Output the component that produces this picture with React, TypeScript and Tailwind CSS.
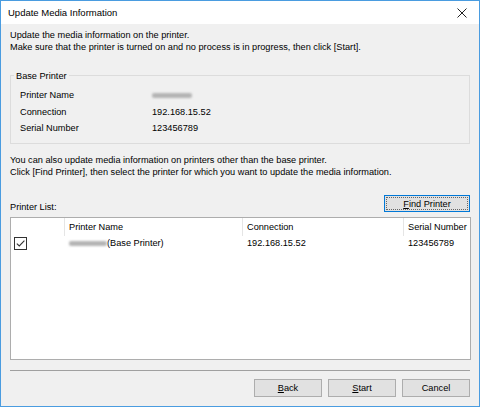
import React from "react";

const font = { fontFamily: '"Liberation Sans", Arial, sans-serif' };

function Blur({ w }: { w: number }) {
  return (
    <span className="inline-flex items-center h-[12px]" style={{ width: w }}>
      <span className="block h-[5px] w-full bg-[#b4b4b4] rounded-[2px] blur-[1.2px]" />
    </span>
  );
}

function Btn({ children }: { children: React.ReactNode }) {
  return (
    <div className="h-[18px] w-[68px] flex items-center justify-center bg-[#e1e1e1] border border-[#adadad] text-black">
      {children}
    </div>
  );
}

export default function App() {
  return (
    <div
      className="w-[480px] h-[407px] border border-[#4a9ce0] bg-[#f0f0f0] flex flex-col text-[9.2px] leading-[12px] text-black overflow-hidden"
      style={font}
    >
      <div className="h-[23px] bg-white flex items-center justify-between pl-[7px] pr-[12px] shrink-0">
        <span className="text-[9.5px]">Update Media Information</span>
        <svg width="10" height="10" viewBox="0 0 10 10">
          <path d="M0.5 0.5 L9.5 9.5 M9.5 0.5 L0.5 9.5" stroke="#222" strokeWidth="1" />
        </svg>
      </div>
      <div className="flex flex-col px-[9px] pt-[5px]">
        <div>
          <div>Update the media information on the printer.</div>
          <div>Make sure that the printer is turned on and no process is in progress, then click [Start].</div>
        </div>
        <div className="mt-[22px] border border-[#dcdcdc] h-[69px] relative pl-[9px] pt-[11px]">
          <span className="absolute -top-[6px] left-[3px] bg-[#f0f0f0] px-[2px]">Base Printer</span>
          <div className="grid grid-cols-[132px_1fr] auto-rows-[16.5px] items-center">
            <div>Printer Name</div>
            <div className="flex items-center"><Blur w={40} /></div>
            <div>Connection</div>
            <div>192.168.15.52</div>
            <div>Serial Number</div>
            <div>123456789</div>
          </div>
        </div>
        <div className="mt-[11px] leading-[11.5px]">
          <div>You can also update media information on printers other than the base printer.</div>
          <div>Click [Find Printer], then select the printer for which you want to update the media information.</div>
        </div>
        <div className="mt-[17px] flex items-start justify-between">
          <div className="mt-[6px]">Printer List:</div>
          <div className="w-[86px] h-[17px] flex items-center justify-center bg-[#e1e1e1] border border-[#0078d7] outline outline-1 outline-dotted -outline-offset-[3px] outline-[#666]">
            <span><u>F</u>ind Printer</span>
          </div>
        </div>
        <div className="mt-[4px] -mr-[1px] h-[143px] bg-white border border-[#adadad] flex flex-col">
          <div className="flex h-[18px] items-center">
            <div className="w-[53px] h-full" />
            <div className="w-[178px] h-full border-l border-[#e5e5e5] pl-[4px] flex items-center">Printer Name</div>
            <div className="w-[161px] h-full border-l border-[#e5e5e5] pl-[4px] flex items-center">Connection</div>
            <div className="flex-1 h-full border-l border-[#e5e5e5] pl-[4px] flex items-center">Serial Number</div>
          </div>
          <div className="flex h-[14px] items-center">
            <div className="w-[53px] pl-[3px] flex items-center">
              <svg width="13" height="13" viewBox="0 0 13 13">
                <rect x="0.5" y="0.5" width="12" height="12" fill="white" stroke="#333" />
                <path d="M2.8 6.6 L5.3 9 L10.4 3.6" stroke="#333" strokeWidth="1.1" fill="none" />
              </svg>
            </div>
            <div className="w-[178px] pl-[5px] flex items-center">
              <Blur w={38} />
              <span>(Base Printer)</span>
            </div>
            <div className="w-[161px] pl-[5px]">192.168.15.52</div>
            <div className="flex-1 pl-[5px]">123456789</div>
          </div>
        </div>
        <div className="mt-[10px] border-t border-[#a0a0a0]" />
        <div className="mt-[8px] flex justify-end gap-[6px]">
          <Btn><span><u>B</u>ack</span></Btn>
          <Btn><span><u>S</u>tart</span></Btn>
          <Btn>Cancel</Btn>
        </div>
      </div>
    </div>
  );
}
